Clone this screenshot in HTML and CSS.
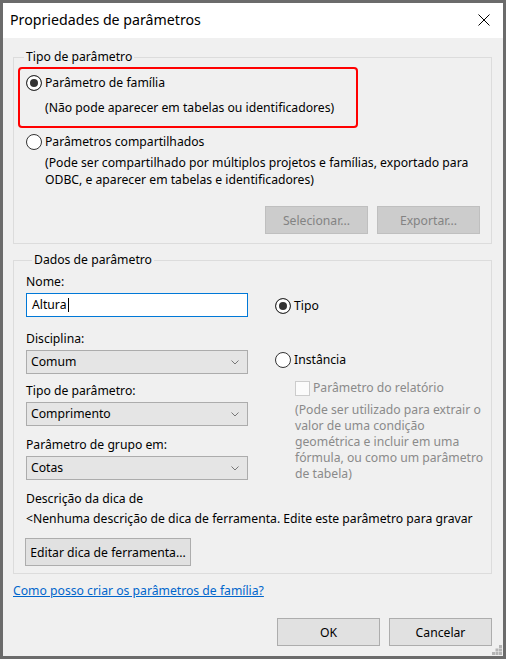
FILE: index.html
```html
<!DOCTYPE html>
<html>
<head>
  <title>Propriedades de parâmetros</title>
  <link rel="stylesheet" href="styles.css">
</head>
<body>
  <div class="dialog">
    <div class="titlebar">
      <span class="title">Propriedades de parâmetros</span>
      <svg class="close" width="12" height="12" viewBox="0 0 12 12">
        <path d="M0.5 0.5 L11.5 11.5 M11.5 0.5 L0.5 11.5" stroke="#000" stroke-width="1" fill="none"/>
      </svg>
    </div>

    <div class="content">
      <fieldset class="group group-type">
        <legend>Tipo de parâmetro</legend>
        <div class="highlight">
          <div class="option"><span class="radio checked"></span>Parâmetro de família</div>
          <div class="hint hint-family">(Não pode aparecer em tabelas ou identificadores)</div>
        </div>
        <div class="option option-shared"><span class="radio"></span>Parâmetros compartilhados</div>
        <p class="hint hint-shared">(Pode ser compartilhado por múltiplos projetos e famílias, exportado para<br>ODBC, e aparecer em tabelas e identificadores)</p>
        <div class="actions">
          <button class="btn" disabled>Selecionar...</button>
          <button class="btn" disabled>Exportar...</button>
        </div>
      </fieldset>

      <fieldset class="group group-data">
        <legend>Dados de parâmetro</legend>
        <div class="columns">
          <div class="fields">
            <div class="field-label label-name">Nome:</div>
            <div class="textbox">Altura<span class="caret"></span></div>

            <div class="field-label label-discipline">Disciplina:</div>
            <div class="select">
              <span>Comum</span>
              <svg width="8" height="5" viewBox="0 0 8 5"><path d="M0.5 0.5 L4 4 L7.5 0.5" stroke="#777" fill="none"/></svg>
            </div>

            <div class="field-label label-type">Tipo de parâmetro:</div>
            <div class="select">
              <span>Comprimento</span>
              <svg width="8" height="5" viewBox="0 0 8 5"><path d="M0.5 0.5 L4 4 L7.5 0.5" stroke="#777" fill="none"/></svg>
            </div>

            <div class="field-label label-group">Parâmetro de grupo em:</div>
            <div class="select">
              <span>Cotas</span>
              <svg width="8" height="5" viewBox="0 0 8 5"><path d="M0.5 0.5 L4 4 L7.5 0.5" stroke="#777" fill="none"/></svg>
            </div>
          </div>

          <div class="scope">
            <div class="option option-tipo"><span class="radio checked"></span>Tipo</div>
            <div class="option option-instance"><span class="radio"></span>Instância</div>
            <div class="check-row"><span class="checkbox"></span>Parâmetro do relatório</div>
            <p class="note">(Pode ser utilizado para extrair o<br>valor de uma condição<br>geométrica e incluir em uma<br>fórmula, ou como um parâmetro<br>de tabela)</p>
          </div>
        </div>

        <div class="tip-label">Descrição da dica de</div>
        <div class="tip-text">&lt;Nenhuma descrição de dica de ferramenta. Edite este parâmetro para gravar</div>
        <button class="btn btn-tip">Editar dica de ferramenta...</button>
      </fieldset>

      <a class="help" href="#">Como posso criar os parâmetros de família?</a>

      <div class="footer">
        <button class="btn">OK</button>
        <button class="btn">Cancelar</button>
      </div>
    </div>

    <svg class="grip" width="10" height="10" viewBox="0 0 10 10">
      <rect x="7" y="0" width="3" height="3" fill="#b4b4b4"/>
      <rect x="3.5" y="3.5" width="3" height="3" fill="#b4b4b4"/>
      <rect x="7" y="3.5" width="3" height="3" fill="#b4b4b4"/>
      <rect x="0" y="7" width="3" height="3" fill="#b4b4b4"/>
      <rect x="3.5" y="7" width="3" height="3" fill="#b4b4b4"/>
      <rect x="7" y="7" width="3" height="3" fill="#b4b4b4"/>
    </svg>
  </div>
</body>
</html>
```

FILE: styles.css
```css
* {
  box-sizing: border-box;
}

body {
  margin: 0;
  font-family: "Noto Sans", "Open Sans", sans-serif;
  font-size: 12.2px;
  line-height: 16px;
  color: #000;
}

.dialog {
  position: relative;
  width: 506px;
  height: 659px;
  border: 3px solid #6b6b6b;
  background-color: #f0f0f0;
  display: flex;
  flex-direction: column;
}

.titlebar {
  height: 35px;
  background-color: #fff;
  display: flex;
  align-items: center;
  justify-content: space-between;
  padding: 0 13px 1px 7px;
}

.title {
  font-size: 14.2px;
}

.content {
  padding: 0 11px 0 10px;
}

/* group boxes */
.group {
  margin: 0;
  padding: 0;
  border: 1px solid #dcdcdc;
  min-width: 0;
}

.group legend {
  margin-left: 6px;
  padding: 0 2px;
  line-height: 16px;
}

.group-type {
  margin-top: 11px;
  padding: 0 11px 9px 4px;
}

.highlight {
  margin-top: 2px;
  width: 340px;
  border: 2px solid #ff0000;
  border-radius: 4px;
  padding: 6px 0 10px 6px;
}

.option {
  display: flex;
  align-items: center;
  height: 16px;
  white-space: nowrap;
}

.radio {
  width: 16px;
  height: 16px;
  border: 1px solid #333;
  border-radius: 50%;
  background-color: #fff;
  margin-right: 3px;
  flex: none;
}

.radio.checked {
  background-color: #333;
  box-shadow: inset 0 0 0 3px #fff;
}

.hint-family {
  margin-top: 9px;
  padding-left: 19px;
}

.option-shared {
  margin: 6px 0 0 8px;
}

.hint-shared {
  margin: 4px 0 0 27px;
  line-height: 17px;
  white-space: nowrap;
}

.actions {
  display: flex;
  justify-content: flex-end;
  gap: 9px;
  margin-top: 18px;
}

.btn {
  width: 103px;
  height: 28px;
  padding: 0;
  font-family: inherit;
  font-size: 12.2px;
  color: #000;
  background-color: #e1e1e1;
  border: 1px solid #adadad;
}

.btn:disabled {
  background-color: #cccccc;
  border-color: #bfbfbf;
  color: #838383;
}

/* parameter data */
.group-data {
  margin-top: 8px;
  padding: 0 11px 7px 12px;
}

.columns {
  display: flex;
  gap: 27px;
}

.fields {
  width: 223px;
}

.field-label {
  margin-bottom: 3px;
}

.label-name {
  margin-top: 6px;
}

.label-discipline {
  margin-top: 14px;
}

.label-type {
  margin-top: 9px;
}

.label-group {
  margin-top: 11px;
}

.textbox {
  height: 24px;
  background-color: #fff;
  border: 1px solid #0078d7;
  padding-left: 5px;
  display: flex;
  align-items: center;
}

.caret {
  width: 1px;
  height: 14px;
  background-color: #000;
  margin-left: 1px;
}

.select {
  height: 24px;
  background-color: #e5e5e5;
  border: 1px solid #acacac;
  padding: 0 8px 0 4px;
  display: flex;
  align-items: center;
  justify-content: space-between;
}

.scope {
  width: 205px;
}

.option-tipo {
  margin-top: 30px;
}

.option-instance {
  margin-top: 38px;
}

.check-row {
  display: flex;
  align-items: center;
  height: 16px;
  margin-top: 12px;
  padding-left: 20px;
  color: #8a8a8a;
  white-space: nowrap;
}

.checkbox {
  width: 15px;
  height: 15px;
  border: 1px solid #cccccc;
  background-color: #fbfbfb;
  margin-right: 3px;
}

.note {
  margin: 6px 0 0 20px;
  color: #8a8a8a;
  white-space: nowrap;
}

.tip-label {
  margin-top: 9px;
}

.tip-text {
  margin-top: 4px;
  white-space: nowrap;
}

.btn-tip {
  width: 166px;
  margin: 11px 0 0 -1px;
}

.help {
  display: inline-block;
  margin-top: 9px;
  color: #0066cc;
}

.footer {
  display: flex;
  justify-content: flex-end;
  gap: 9px;
  margin-top: 19px;
}

.grip {
  position: absolute;
  right: 1px;
  bottom: 1px;
}
```
